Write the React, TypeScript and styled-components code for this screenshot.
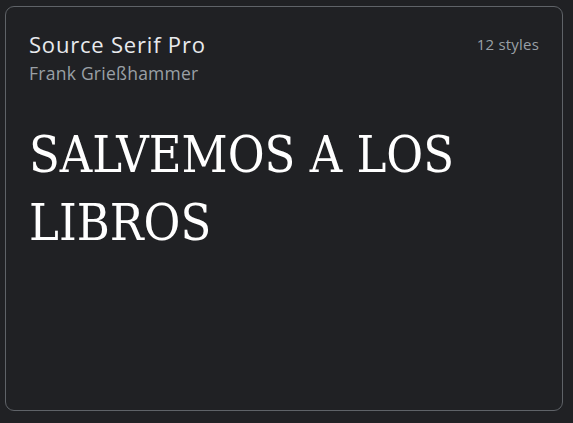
import React from "react";
import styled, { createGlobalStyle } from "styled-components";

const Global = createGlobalStyle`
  html, body { margin: 0; padding: 0; background: #202124; }
  body { width: 573px; height: 423px; overflow: hidden; }
`;

const Page = styled.div`
  padding: 6px 10px 0 5px;
  box-sizing: border-box;
  width: 573px;
  height: 423px;
`;

const Card = styled.div`
  box-sizing: border-box;
  width: 558px;
  height: 405px;
  border: 1px solid #5f6368;
  border-radius: 9px;
  background: #202124;
  padding: 23px 23px 20px 23px;
  display: flex;
  flex-direction: column;
`;

const Header = styled.div`
  display: flex;
  justify-content: space-between;
  align-items: flex-start;
`;

const Names = styled.div`
  display: flex;
  flex-direction: column;
  gap: 3px;
`;

const Title = styled.div`
  font-family: "Open Sans", sans-serif;
  font-size: 22px;
  line-height: 28px;
  letter-spacing: 0.8px;
  color: #e8eaed;
`;

const Designer = styled.div`
  font-family: "Open Sans", sans-serif;
  font-size: 17.5px;
  line-height: 24px;
  letter-spacing: 0.25px;
  color: #9aa0a6;
`;

const Styles = styled.div`
  font-family: "Open Sans", sans-serif;
  font-size: 15px;
  line-height: 28px;
  letter-spacing: 0.2px;
  color: #9aa0a6;
`;

const Sample = styled.div`
  margin-top: 36px;
  font-family: "DejaVu Serif", serif;
  font-stretch: condensed;
  font-size: 50px;
  line-height: 68px;
  color: #ffffff;
`;

export default function App() {
  return (
    <>
      <Global />
      <Page>
        <Card>
          <Header>
            <Names>
              <Title>Source Serif Pro</Title>
              <Designer>Frank Grießhammer</Designer>
            </Names>
            <Styles>12 styles</Styles>
          </Header>
          <Sample>SALVEMOS A LOS LIBROS</Sample>
        </Card>
      </Page>
    </>
  );
}
